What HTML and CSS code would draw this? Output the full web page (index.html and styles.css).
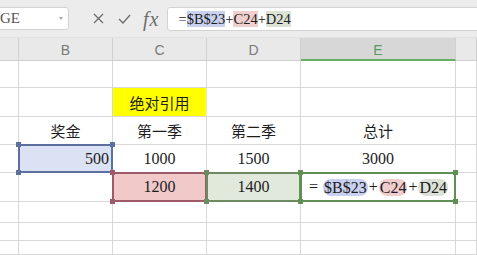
FILE: index.html
```html
<!DOCTYPE html>
<html lang="zh">
  <head>
    <meta charset="UTF-8" />
    <title>绝对引用</title>
    <link rel="stylesheet" href="styles.css">
  </head>
  <body>
    <header class="toolbar">
      <div class="namebox">
        <span class="name">GE</span>
        <span class="arrow"></span>
      </div>
      <svg class="btn-x" width="11" height="11" viewBox="0 0 11 11">
        <path d="M1 1 L10 10 M10 1 L1 10" />
      </svg>
      <svg class="btn-ok" width="13" height="10" viewBox="0 0 13 10">
        <path d="M1 5 L5 9 L12 1" />
      </svg>
      <span class="fx">fx</span>
      <div class="formula">
        <span class="ch">=</span><span class="ref-b">$B$23</span><span class="ch">+</span><span class="ref-c">C24</span><span class="ch">+</span><span class="ref-d">D24</span>
      </div>
    </header>

    <div class="sheet">
      <!-- column headers -->
      <div class="cell col"></div>
      <div class="cell col">B</div>
      <div class="cell col">C</div>
      <div class="cell col">D</div>
      <div class="cell col col-active">E</div>
      <div class="cell col"></div>

      <!-- row 21 -->
      <div class="cell"></div>
      <div class="cell"></div>
      <div class="cell"></div>
      <div class="cell"></div>
      <div class="cell"></div>
      <div class="cell"></div>

      <!-- row 22 -->
      <div class="cell"></div>
      <div class="cell"></div>
      <div class="cell cn note">绝对引用</div>
      <div class="cell"></div>
      <div class="cell"></div>
      <div class="cell"></div>

      <!-- row 23 -->
      <div class="cell"></div>
      <div class="cell cn">奖金</div>
      <div class="cell cn">第一季</div>
      <div class="cell cn">第二季</div>
      <div class="cell cn">总计</div>
      <div class="cell"></div>

      <!-- row 24 -->
      <div class="cell"></div>
      <div class="cell num right range range-b">500
        <span class="h tl"></span><span class="h tr"></span><span class="h bl"></span><span class="h br"></span>
      </div>
      <div class="cell num">1000</div>
      <div class="cell num">1500</div>
      <div class="cell num">3000</div>
      <div class="cell"></div>

      <!-- row 25 -->
      <div class="cell"></div>
      <div class="cell"></div>
      <div class="cell num range range-c">1200
        <span class="h tl"></span><span class="h tr"></span><span class="h bl"></span><span class="h br"></span>
      </div>
      <div class="cell num range range-d">1400
        <span class="h tl"></span><span class="h tr"></span><span class="h bl"></span><span class="h br"></span>
      </div>
      <div class="cell num range range-e">
        <span class="op">=</span><span class="pill pill-b">$B$23</span><span class="op">+</span><span class="pill pill-c">C24</span><span class="op">+</span><span class="pill pill-d">D24</span>
        <span class="h tl"></span><span class="h tr"></span><span class="h bl"></span><span class="h br"></span>
      </div>
      <div class="cell"></div>

      <!-- rows 26-28 -->
      <div class="cell"></div>
      <div class="cell"></div>
      <div class="cell"></div>
      <div class="cell"></div>
      <div class="cell"></div>
      <div class="cell"></div>

      <div class="cell"></div>
      <div class="cell"></div>
      <div class="cell"></div>
      <div class="cell"></div>
      <div class="cell"></div>
      <div class="cell"></div>

      <div class="cell"></div>
      <div class="cell"></div>
      <div class="cell"></div>
      <div class="cell"></div>
      <div class="cell"></div>
      <div class="cell"></div>
    </div>
  </body>
</html>
```

FILE: styles.css
```css
* {
  box-sizing: border-box;
}
body {
  margin: 0;
  width: 477px;
  height: 255px;
  overflow: hidden;
  background: #fff;
  font-family: "Liberation Serif", "Noto Sans CJK SC", serif;
  color: #1c1c1c;
}

/* formula bar */
.toolbar {
  height: 38px;
  background: #ececec;
  border-bottom: 1px solid #e2e2e2;
  display: flex;
  align-items: center;
  overflow: hidden;
}
.namebox {
  width: 74px;
  height: 23px;
  margin-left: -5px;
  background: #fff;
  border: 1px solid #d3d3d3;
  border-radius: 3px;
  display: flex;
  align-items: center;
  justify-content: space-between;
  padding: 0 5px 0 4px;
}
.name {
  font-size: 15px;
  color: #555;
}
.arrow {
  width: 0;
  height: 0;
  border-left: 2px solid transparent;
  border-right: 2px solid transparent;
  border-top: 3px solid #a8a8a8;
}
.btn-x {
  margin-left: 24px;
}
.btn-ok {
  margin-left: 14px;
}
.btn-x path,
.btn-ok path {
  fill: none;
  stroke: #6c6c6c;
  stroke-width: 1.3;
}
.fx {
  margin-left: 12px;
  font-style: italic;
  font-size: 20px;
  letter-spacing: 1px;
  color: #6c6c6c;
  line-height: 1;
}
.formula {
  flex: 1;
  height: 24px;
  margin-left: 8px;
  margin-right: -5px;
  background: #fff;
  border: 1px solid #d3d3d3;
  border-radius: 3px;
  padding-left: 10px;
  display: flex;
  align-items: center;
  font-size: 14.5px;
}
.formula span {
  line-height: 16px;
}
.ref-b {
  background: #c9d1ee;
}
.ref-c {
  background: #f1cfcf;
}
.ref-d {
  background: #dce2d6;
}

/* grid */
.sheet {
  display: grid;
  grid-template-columns: 19px 94px 94px 94px 155px 1fr;
  grid-template-rows: 23px 27px 29px 28px 28px 29px 21px 18px 1fr;
  height: 217px;
}
.cell {
  border-right: 1px solid #d8d8d8;
  border-bottom: 1px solid #d8d8d8;
  display: flex;
  align-items: center;
  justify-content: center;
  white-space: nowrap;
}
.col {
  background: #e9e9e9;
  border-right-color: #d0d0d0;
  border-bottom-color: #d0d0d0;
  font-family: "Liberation Sans", sans-serif;
  font-size: 14px;
  color: #7a7a7a;
  padding-top: 2px;
}
.col-active {
  background: #d7d7d7;
  border-bottom: 2px solid #66ad66;
  color: #5e985e;
}
.cn {
  font-family: "Noto Sans CJK SC", sans-serif;
  font-size: 15px;
  color: #1e1e1e;
}
.note {
  background: #ffff00;
  border-right-color: #f0f0a0;
}
.num {
  font-size: 16px;
}
.right {
  justify-content: flex-end;
  padding-right: 3px;
}

/* highlighted ranges */
.range {
  position: relative;
}
.range::after {
  content: "";
  position: absolute;
  top: -1px;
  left: -1px;
  right: -1px;
  bottom: -1px;
  border: 2px solid var(--edge);
}
.h {
  position: absolute;
  width: 5px;
  height: 5px;
  background: var(--edge);
  z-index: 1;
}
.tl { top: -3px; left: -3px; }
.tr { top: -3px; right: -3px; }
.bl { bottom: -3px; left: -3px; }
.br { bottom: -3px; right: -3px; }

.range-b {
  --edge: #5d6f9f;
  background: #dbe2f3;
}
.range-c {
  --edge: #9e5a68;
  background: #f1c9c9;
}
.range-d {
  --edge: #6d8a60;
  background: #e1e8dc;
}
.range-e {
  --edge: #5f8f52;
}

.op {
  margin: 0 1px;
}
.pill {
  line-height: 17px;
  border-radius: 8px;
  padding: 0 1px;
}
.pill-b {
  margin-left: 4px;
  background: #cad0ef;
}
.pill-c {
  background: #f2cdcd;
}
.pill-d {
  background: #dde2d8;
}
```
